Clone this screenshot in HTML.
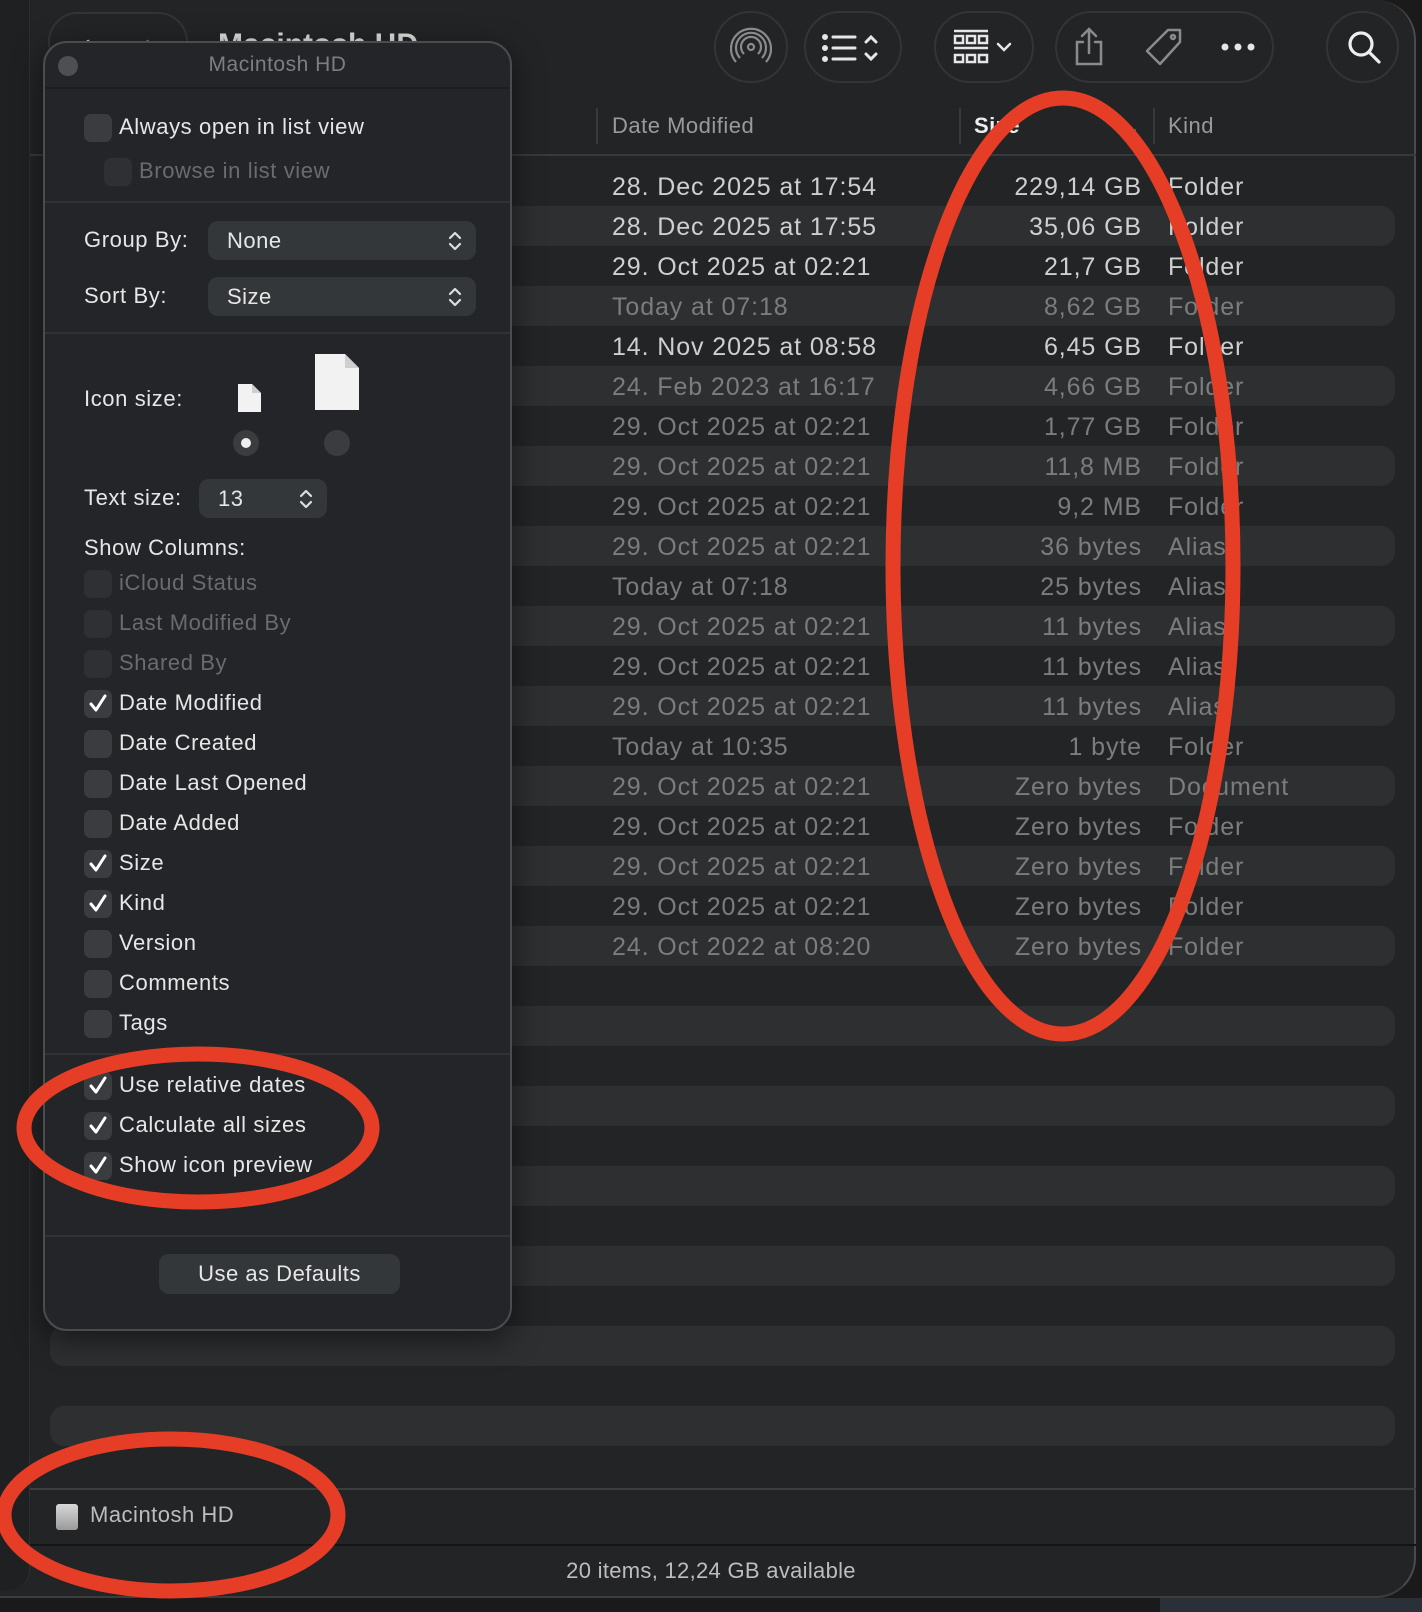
<!DOCTYPE html>
<html><head><meta charset="utf-8"><style>
*{margin:0;padding:0;box-sizing:border-box}
body{width:1422px;height:1612px;background:#1a1a1a;font-family:"Liberation Sans",sans-serif;position:relative;overflow:hidden}
.a{position:absolute}
.win{left:0;top:0;width:1416px;height:1598px;background:#232426;border-radius:0 40px 40px 0;border-right:2px solid #4a4b4d;border-bottom:2px solid #3c3d3f}
.side{left:0;top:0;width:30px;height:1590px;background:#1f2022;border-right:1px solid #2e2f31;border-radius:0 0 20px 0}
.stripe{left:50px;width:1345px;height:40px;background:#2e2f31;border-radius:14px}
.row{left:0;width:1400px;height:40px;font-size:25px;line-height:40px;letter-spacing:0.9px}
.row span{position:absolute}
.d{left:612px}.s{right:258px;text-align:right}.k{left:1168px}
.hdr{top:113px;font-size:22px;color:#9a9a9a;letter-spacing:0.5px}
.tb{border:2px solid #333437;border-radius:38px;height:72px;top:11px}
.panel{left:43px;top:41px;width:469px;height:1290px;background:#232528;border:2px solid #4b4c4f;border-radius:24px;box-shadow:0 8px 30px rgba(0,0,0,.5)}
.sep{left:0;width:465px;height:2px;background:#303236}
.lbl{font-size:22px;color:#e6e6e6;line-height:28px;letter-spacing:0.6px}
.cb{width:28px;height:28px;border-radius:7px;background:#3a3c3f}
.dim{color:#6a6b6d}
.dimcb{background:#2e3033}
.pop{background:#34373a;border-radius:10px;height:39px;font-size:22px;color:#e6e6e6;line-height:39px;padding-left:19px;letter-spacing:0.5px}
.chk{position:absolute;left:5px;top:2px}
</style></head><body>
<div class="a win"></div>
<div class="a side"></div>

<div class="a" style="left:48px;top:12px;width:140px;height:60px;border:2px solid #333437;border-radius:30px"></div>
<div class="a" style="left:82px;top:28px;color:#ccc;font-size:26px">‹</div>
<div class="a" style="left:145px;top:28px;color:#777;font-size:26px">›</div>
<div class="a" style="left:218px;top:28px;color:#ddd;font-size:30px;font-weight:bold">Macintosh HD</div>

<div id="st"></div>
<div class="a hdr" style="left:612px">Date Modified</div>
<div class="a hdr" style="left:974px;color:#eee;font-weight:bold">Size</div>
<div class="a" style="left:1126px;top:118px;color:#888;font-size:16px">⌄</div>
<div class="a hdr" style="left:1168px">Kind</div>
<div class="a" style="left:596px;top:108px;width:2px;height:36px;background:#38393b"></div>
<div class="a" style="left:959px;top:108px;width:2px;height:36px;background:#38393b"></div>
<div class="a" style="left:1153px;top:108px;width:2px;height:36px;background:#38393b"></div>
<div class="a" style="left:30px;top:154px;width:1386px;height:2px;background:#38393b"></div>

<div class="a tb" style="left:714px;width:74px"></div>
<svg class="a" style="left:730px;top:26px" width="42" height="42" viewBox="0 0 42 42" fill="none" stroke="#8a8b8d" stroke-width="2.2"><circle cx="21" cy="21" r="3"/><path d="M14 28a10 10 0 1 1 14 0M10 32a15 15 0 1 1 22 0M6 36a20 20 0 1 1 30 0"/></svg>
<div class="a tb" style="left:804px;width:98px"></div>
<svg class="a" style="left:822px;top:30px" width="66" height="36" viewBox="0 0 66 36" fill="none" stroke="#e6e6e6" stroke-width="3" stroke-linecap="round"><circle cx="3" cy="7" r="1.5" fill="#e6e6e6"/><circle cx="3" cy="18" r="1.5" fill="#e6e6e6"/><circle cx="3" cy="29" r="1.5" fill="#e6e6e6"/><path d="M11 7h22M11 18h22M11 29h22M44 12l5-5 5 5M44 24l5 5 5-5"/></svg>
<div class="a tb" style="left:934px;width:100px"></div>
<svg class="a" style="left:952px;top:28px" width="66" height="40" viewBox="0 0 66 40" fill="none" stroke="#e6e6e6" stroke-width="2.5"><path d="M2 3h34M2 20h34"/><rect x="3" y="8" width="8" height="7"/><rect x="15" y="8" width="8" height="7"/><rect x="27" y="8" width="8" height="7"/><rect x="3" y="27" width="8" height="7"/><rect x="15" y="27" width="8" height="7"/><rect x="27" y="27" width="8" height="7"/><path d="M46 16l6 6 6-6" stroke-linecap="round"/></svg>
<div class="a tb" style="left:1055px;width:219px"></div>
<svg class="a" style="left:1072px;top:26px" width="34" height="42" viewBox="0 0 34 42" fill="none" stroke="#8a8b8d" stroke-width="2.5" stroke-linecap="round"><path d="M17 3v24M10 10l7-7 7 7M11 16H5v22h24V16h-6"/></svg>
<svg class="a" style="left:1144px;top:26px" width="40" height="42" viewBox="0 0 40 42" fill="none" stroke="#8a8b8d" stroke-width="2.5" stroke-linejoin="round"><path d="M24 4h12v12L16 38 3 25z"/><circle cx="29" cy="11" r="2"/></svg>
<svg class="a" style="left:1220px;top:42px" width="36" height="10"><circle cx="5" cy="5" r="3.5" fill="#e6e6e6"/><circle cx="18" cy="5" r="3.5" fill="#e6e6e6"/><circle cx="31" cy="5" r="3.5" fill="#e6e6e6"/></svg>
<div class="a tb" style="left:1326px;width:73px"></div>
<svg class="a" style="left:1345px;top:28px" width="40" height="40" viewBox="0 0 40 40" fill="none" stroke="#eee" stroke-width="3.2" stroke-linecap="round"><circle cx="16" cy="16" r="11"/><path d="M24 24l10 10"/></svg>

<div id="rows"></div>

<div class="a" style="left:30px;top:1488px;width:1386px;height:2px;background:#3c3d3f"></div>
<div class="a" style="left:56px;top:1504px;width:22px;height:26px;background:linear-gradient(#d8d8d8,#9a9a9a);border-radius:3px"></div>
<div class="a" style="left:90px;top:1502px;font-size:22px;color:#bdbdbd;letter-spacing:0.5px">Macintosh HD</div>
<div class="a" style="left:30px;top:1544px;width:1386px;height:2px;background:#141516"></div>
<div class="a" style="left:0;top:1558px;width:1422px;text-align:center;font-size:22px;color:#bdbdbd;letter-spacing:0.3px">20 items, 12,24 GB available</div>
<div class="a" style="left:1160px;top:1598px;width:262px;height:14px;background:#2a3038"></div>

<div class="a panel">
 <div class="a" style="left:13px;top:13px;width:20px;height:20px;border-radius:50%;background:#4d4f52"></div>
 <div class="a" style="left:0;top:10px;width:465px;text-align:center;font-size:21px;color:#7d7e80;letter-spacing:0.5px">Macintosh HD</div>
 <div class="a sep" style="top:44px;background:#1d1e20"></div>
 <div id="pc"></div>
</div>

<svg class="a" style="left:0;top:0" width="1422" height="1612">
<g fill="none" stroke="#e63e26" stroke-width="15">
<ellipse cx="1063" cy="566" rx="170" ry="468"/>
<ellipse cx="198" cy="1128" rx="174" ry="74"/>
<ellipse cx="171" cy="1515" rx="167" ry="76"/>
</g></svg>

<script>
let st='';for(let k=0;k<16;k++)st+=`<div class="a stripe" style="top:${206+80*k}px"></div>`;
document.getElementById('st').innerHTML=st;
const R=[["28. Dec 2025 at 17:54","229,14 GB","Folder",1],["28. Dec 2025 at 17:55","35,06 GB","Folder",1],["29. Oct 2025 at 02:21","21,7 GB","Folder",1],["Today at 07:18","8,62 GB","Folder",0],["14. Nov 2025 at 08:58","6,45 GB","Folder",1],["24. Feb 2023 at 16:17","4,66 GB","Folder",0],["29. Oct 2025 at 02:21","1,77 GB","Folder",0],["29. Oct 2025 at 02:21","11,8 MB","Folder",0],["29. Oct 2025 at 02:21","9,2 MB","Folder",0],["29. Oct 2025 at 02:21","36 bytes","Alias",0],["Today at 07:18","25 bytes","Alias",0],["29. Oct 2025 at 02:21","11 bytes","Alias",0],["29. Oct 2025 at 02:21","11 bytes","Alias",0],["29. Oct 2025 at 02:21","11 bytes","Alias",0],["Today at 10:35","1 byte","Folder",0],["29. Oct 2025 at 02:21","Zero bytes","Document",0],["29. Oct 2025 at 02:21","Zero bytes","Folder",0],["29. Oct 2025 at 02:21","Zero bytes","Folder",0],["29. Oct 2025 at 02:21","Zero bytes","Folder",0],["24. Oct 2022 at 08:20","Zero bytes","Folder",0]];
let h='';R.forEach((r,i)=>{h+=`<div class="a row" style="top:${167+40*i}px;color:${r[3]?'#cfcfcf':'#7b7c7e'}"><span class="d">${r[0]}</span><span class="s">${r[1]}</span><span class="k">${r[2]}</span></div>`});
document.getElementById('rows').innerHTML=h;
const ck='<svg class="chk" width="18" height="22" viewBox="0 0 18 22"><path d="M2 12l5 6L16 4" fill="none" stroke="#fff" stroke-width="3" stroke-linecap="round" stroke-linejoin="round"/></svg>';
function cb(x,y,t,c,dim){return `<div class="a cb ${dim?'dimcb':''}" style="left:${x}px;top:${y-14}px">${c?ck:''}</div><div class="a lbl ${dim?'dim':''}" style="left:${x+35}px;top:${y-15}px">${t}</div>`}
let p='';
const ox=43,oy=41;
p+=cb(82-ox,126-oy,'Always open in list view',0,0);
p+=cb(102-ox,170-oy,'Browse in list view',0,1);
p+=`<div class="a sep" style="top:${199-oy}px"></div>`;
const arr='<svg style="position:absolute;right:14px;top:9px" width="14" height="22" viewBox="0 0 14 22" fill="none" stroke="#ddd" stroke-width="2.2" stroke-linecap="round" stroke-linejoin="round"><path d="M2 8l5-5 5 5M2 14l5 5 5-5"/></svg>';
p+=`<div class="a lbl" style="left:${82-ox}px;top:${238-oy-14}px">Group By:</div><div class="a pop" style="left:${206-ox}px;top:${238-oy-19}px;width:268px">None${arr}</div>`;
p+=`<div class="a lbl" style="left:${82-ox}px;top:${294-oy-14}px">Sort By:</div><div class="a pop" style="left:${206-ox}px;top:${294-oy-19}px;width:268px">Size${arr}</div>`;
p+=`<div class="a sep" style="top:${330-oy}px"></div>`;
p+=`<div class="a lbl" style="left:${82-ox}px;top:${397-oy-14}px">Icon size:</div>`;
p+=`<svg class="a" style="left:${234-ox}px;top:${381-oy}px" width="26" height="30" viewBox="0 0 26 30"><path d="M2 1h14l9 9v19H2z" fill="#f2f2f2"/><path d="M16 1v9h9" fill="#cfcfcf"/></svg>`;
p+=`<svg class="a" style="left:${312-ox}px;top:${351-oy}px" width="46" height="58" viewBox="0 0 46 58"><path d="M1 1h30l14 14v42H1z" fill="#f2f2f2"/><path d="M31 1v14h14" fill="#cfcfcf"/></svg>`;
p+=`<div class="a" style="left:${231-ox}px;top:${428-oy}px;width:26px;height:26px;border-radius:50%;background:#3a3c3f"><div style="margin:8px;width:10px;height:10px;border-radius:50%;background:#eee"></div></div>`;
p+=`<div class="a" style="left:${322-ox}px;top:${428-oy}px;width:26px;height:26px;border-radius:50%;background:#3a3c3f"></div>`;
p+=`<div class="a lbl" style="left:${82-ox}px;top:${496-oy-14}px">Text size:</div><div class="a pop" style="left:${197-ox}px;top:${496-oy-19}px;width:128px">13${arr}</div>`;
p+=`<div class="a lbl" style="left:${82-ox}px;top:${546-oy-14}px">Show Columns:</div>`;
const C=[["iCloud Status",0,1],["Last Modified By",0,1],["Shared By",0,1],["Date Modified",1,0],["Date Created",0,0],["Date Last Opened",0,0],["Date Added",0,0],["Size",1,0],["Kind",1,0],["Version",0,0],["Comments",0,0],["Tags",0,0]];
C.forEach((c,i)=>{p+=cb(82-ox,582+40*i-oy,c[0],c[1],c[2])});
p+=`<div class="a sep" style="top:${1051-oy}px"></div>`;
["Use relative dates","Calculate all sizes","Show icon preview"].forEach((t,i)=>{p+=cb(82-ox,1084+40*i-oy,t,1,0)});
p+=`<div class="a sep" style="top:${1233-oy}px"></div>`;
p+=`<div class="a" style="left:${157-ox}px;top:${1252-oy}px;width:241px;height:40px;background:#34373a;border-radius:10px;text-align:center;line-height:40px;font-size:22px;color:#e6e6e6;letter-spacing:0.5px">Use as Defaults</div>`;
document.getElementById('pc').innerHTML=p;
</script>
</body></html>
